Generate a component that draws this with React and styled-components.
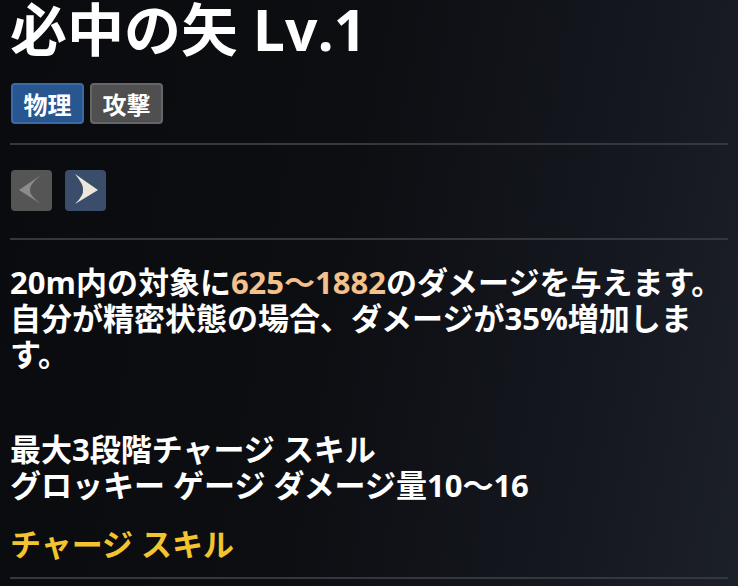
import styled, { createGlobalStyle } from 'styled-components';

const GlobalStyle = createGlobalStyle`
  html, body {
    margin: 0;
    padding: 0;
  }
  body {
    min-height: 586px;
    background: linear-gradient(100deg, #0a0b0e 0%, #0d0e12 45%, #151820 80%, #1c2028 100%);
    font-family: 'Open Sans', 'Noto Sans CJK JP', sans-serif;
    color: #ffffff;
  }
`;

const Wrapper = styled.section`
  padding: 0 10px;
  width: 718px;
`;

const Title = styled.h1`
  margin: -3px 0 0;
  font-size: 57px;
  font-weight: 700;
  line-height: 1.15;
`;

const Tags = styled.div`
  display: flex;
  gap: 6px;
  margin-top: 20px;
  padding-left: 1px;
`;

const Tag = styled.span`
  display: inline-flex;
  align-items: center;
  justify-content: center;
  width: 73px;
  height: 41px;
  box-sizing: border-box;
  border-radius: 4px;
  font-size: 24px;
  font-weight: 700;
  background: ${(p) => (p.$kind === 'blue' ? '#285690' : '#4f4f50')};
  border: 2px solid ${(p) => (p.$kind === 'blue' ? '#3b6aa6' : '#666668')};
`;

const Divider = styled.hr`
  margin: ${(p) => p.$top || 20}px 0 0;
  border: 0;
  height: 2px;
  background: #35373d;
`;

const Nav = styled.div`
  display: flex;
  gap: 13px;
  margin-top: 25px;
  padding-left: 1px;
`;

const NavButton = styled.button`
  width: 41px;
  height: 41px;
  padding: 0;
  border: 0;
  border-radius: 4px;
  display: flex;
  align-items: center;
  justify-content: center;
  background: ${(p) => (p.$active ? '#3a4d6b' : '#555555')};
  color: ${(p) => (p.$active ? '#ece7da' : '#8c8c8c')};
`;

const Body = styled.div`
  margin-top: 24px;
  font-size: 31px;
  font-weight: 700;
  line-height: 36px;
`;

const Para = styled.p`
  margin: ${(p) => p.$top || 0}px 0 0;
`;

const Hl = styled.span`
  color: #f4c08b;
`;

const Charge = styled.p`
  margin: 23px 0 0;
  color: #f4c430;
  font-size: 31px;
  font-weight: 700;
  line-height: 36px;
`;

const ArrowLeft = () => (
  <svg width="41" height="41" viewBox="0 0 41 41">
    <path d="M8 20 L30 5 Q18 15 19 20 Q18 25 30 34 Z" fill="currentColor" />
  </svg>
);

const ArrowRight = () => (
  <svg width="41" height="41" viewBox="0 0 41 41">
    <path d="M33 20 L10 4 Q19 15 18 20 Q19 25 10 34 Z" fill="currentColor" />
  </svg>
);

const App = () => {
  return (
    <Wrapper>
      <GlobalStyle />
      <Title>必中の矢 Lv.1</Title>
      <Tags>
        <Tag $kind='blue'>物理</Tag>
        <Tag>攻撃</Tag>
      </Tags>
      <Divider $top={19} />
      <Nav>
        <NavButton>
          <ArrowLeft />
        </NavButton>
        <NavButton $active>
          <ArrowRight />
        </NavButton>
      </Nav>
      <Divider $top={27} />
      <Body>
        <Para>
          20m内の対象に<Hl>625〜1882</Hl>のダメージを与えます。自分が精密状態の場合、ダメージが35%増加します。
        </Para>
        <Para $top={59}>
          最大3段階チャージ スキル
          <br />
          グロッキー ゲージ ダメージ量10〜16
        </Para>
      </Body>
      <Charge>チャージ スキル</Charge>
      <Divider $top={15} />
    </Wrapper>
  );
};

export default App;
